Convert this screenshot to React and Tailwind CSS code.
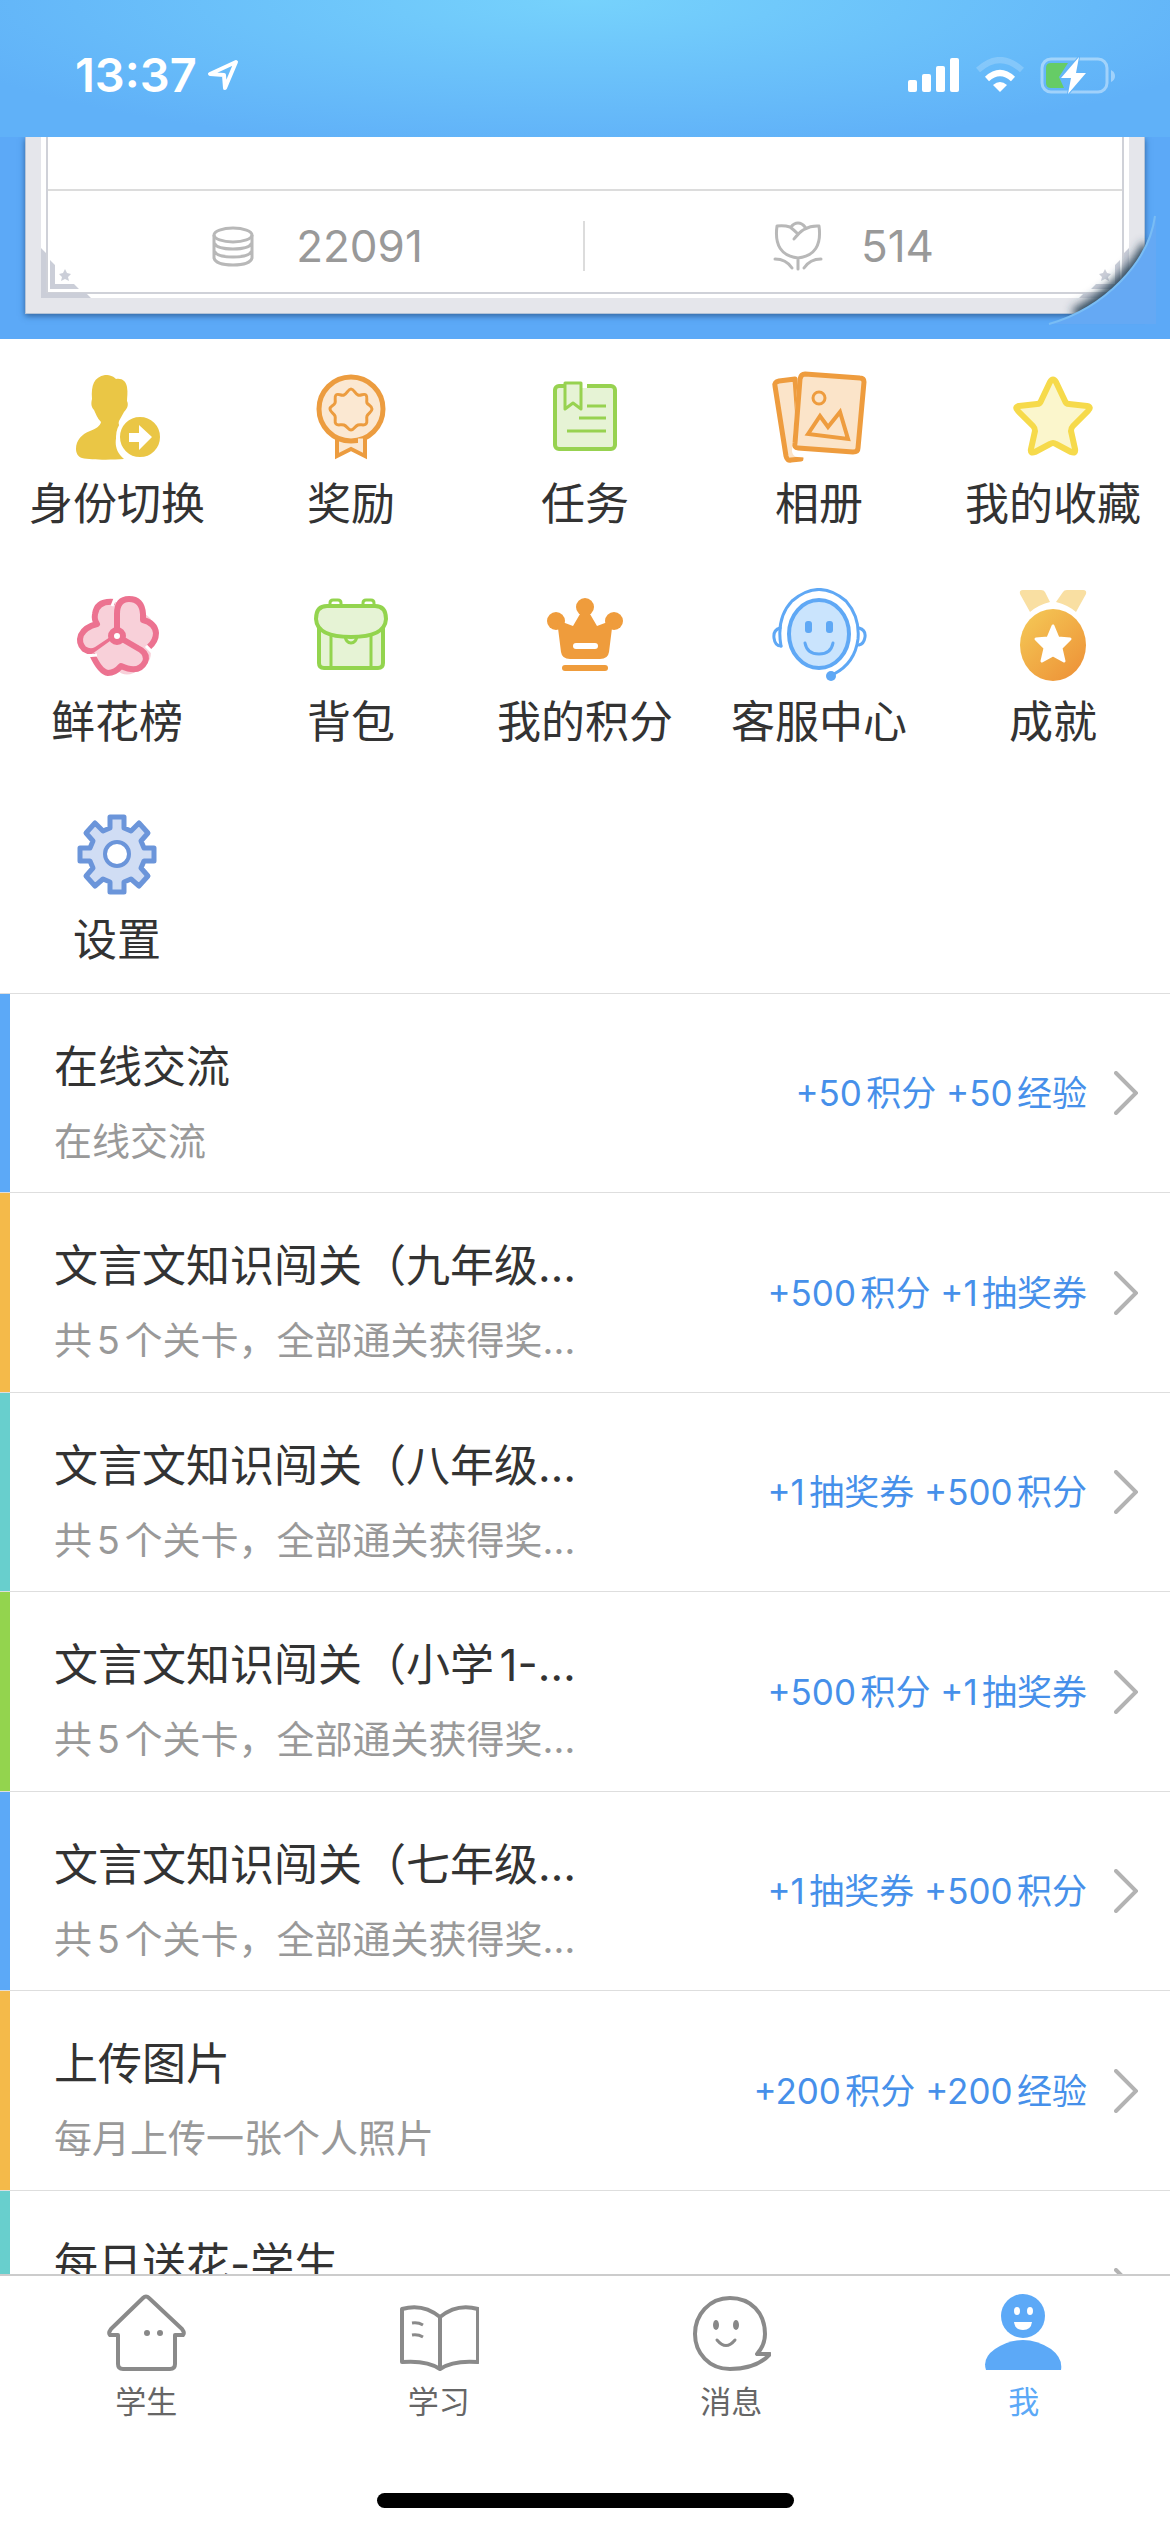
const FONT = "font-['Inter','Noto_Sans_CJK_SC',sans-serif]";

function IconSwitch() {
  return (
    <svg viewBox="0 0 96 96" className="size-24" aria-hidden="true">
      <path fill="#eac645" d="M36 5c6 0 9 2 11 4 6-1 10 2 11 8 1 6 0 10 0 14 2 4 0 8-3 11l-5 9c-1 3 0 4 2 6-6 8-9 22 3 32-13 1-33 1-42-1-4-1-6-5-6-9 0-9 6-15 14-18 7-3 10-5 11-9-4-4-5-8-7-12-3-3-3-7-2-11-1-14 2-22 13-24z" />
      <circle cx="71" cy="67" r="22" fill="#eac645" stroke="#fff" strokeWidth="4" />
      <path fill="#fff" d="M60 63h10v-8l13 12-13 13v-8H60z" />
    </svg>
  );
}

function IconAward() {
  return (
    <svg viewBox="0 0 96 96" className="size-24" fill="#fbe8d2" stroke="#ec9c3f" strokeWidth="5" aria-hidden="true">
      <path strokeWidth="4" d="M34 66v20l14-7 14 7V66" />
      <circle cx="48" cy="39" r="32" />
      <path strokeWidth="3" strokeLinejoin="round" d="M48 19c3 0 4 5 7 6s6-2 8 0 0 6 1 8 5 3 5 6-4 4-5 7 1 6-1 8-5 0-8 1-4 5-7 5-4-4-7-5-6 1-8-1 0-5-1-8-5-4-5-7 4-3 5-6-1-6 1-8 5 1 8 0 4-6 7-6z" />
      <path stroke="#fbe8d2" strokeWidth="5" d="M55 71h5" />
    </svg>
  );
}

function IconTask() {
  return (
    <svg viewBox="0 0 96 96" className="size-24" fill="#e6f3d5" stroke="#97d250" strokeWidth="4" aria-hidden="true">
      <rect x="18" y="16" width="60" height="63" rx="4" />
      <path stroke="#fff" strokeWidth="6" d="M44 15h6" />
      <path fill="#e6f3d5" strokeWidth="3" strokeLinejoin="round" d="M28 13h16v26l-8-6-8 6z" />
      <path strokeWidth="3" d="M50 36h19M42 48h27M30 61h39" />
    </svg>
  );
}

function IconAlbum() {
  return (
    <svg viewBox="0 0 96 96" className="size-24" fill="#fbe4c9" stroke="#ee9c3e" strokeLinejoin="round" aria-hidden="true">
      <path strokeWidth="5" d="M4 16q-1-4 4-5l16-2 6 80-10 1q-4 1-5-4z" />
      <path stroke="#fff" strokeWidth="12" d="M33 6l58 4-6 75-58-4z" />
      <path strokeWidth="5" d="M34 4l55 4q4 0 4 4l-6 66q0 4-5 4l-55-4q-4 0-3-5l5-64q1-5 5-5z" />
      <circle cx="48" cy="28" r="6" strokeWidth="3" />
      <path strokeWidth="4" strokeLinejoin="miter" d="M37 64l12-18 8 11 12-15 8 27z" />
    </svg>
  );
}

function IconStar() {
  return (
    <svg viewBox="0 0 96 96" className="size-24" fill="#fbf6cc" stroke="#f6da4b" strokeWidth="6" strokeLinejoin="round" aria-hidden="true">
      <path d="M45 12q3-5 6 0l9 19q1 3 4 3l18 2q5 1 1 5L68 56q-2 2-2 5l4 18q1 5-4 3l-15-8q-3-2-6 0l-15 8q-5 2-4-3l4-18q0-3-2-5L13 41q-4-4 1-5l18-2q3 0 4-3z" />
    </svg>
  );
}

function IconFlower() {
  return (
    <svg viewBox="0 0 96 96" className="size-24" fill="#f8d0d9" stroke="#ec7290" strokeWidth="6" strokeLinejoin="round" aria-hidden="true">
      <path stroke="none" d="M48 14Q28 12 26 36 8 40 10 54q2 8 14 8 8 26 24 20 10 10 24-2 14-8 8-22 14-24-8-34Q70 8 54 14z" />
      <path d="M46 14Q28 12 26 26q-1 6 2 10-12 3-16 11-3 8 3 14 6 4 12 1l21-14" />
      <path d="M48 47V26q0-15 12-15 13 0 14 15v6q12 3 13 13 0 8-7 14" />
      <path d="M48 48l24 14q7 5 4 12-6 12-24 4-6 7-13 7-8-1-16-19" />
      <path stroke="#fff" strokeWidth="3" d="M47 8l-4 10M16 68l12-1M84 65l-7-7" />
      <circle cx="48" cy="48" r="6" fill="#fff" />
    </svg>
  );
}

function IconBag() {
  return (
    <svg viewBox="0 0 96 96" className="size-24" fill="#e6f3d5" stroke="#93d44e" strokeWidth="4" aria-hidden="true">
      <path fill="#fff" strokeWidth="3" d="M27 20v-5q0-3 3-3h5q3 0 3 3v5M60 20v-5q0-3 3-3h5q3 0 3 3v5" />
      <path d="M16 38v37q0 5 5 5h54q5 0 5-5V38" />
      <path strokeWidth="3" d="M28 44v36M68 44v36" />
      <path strokeWidth="3" d="M42 48q1 7 6 7t6-7z" />
      <path d="M24 18h48q11 0 11 13-1 18-35 18T13 31q0-13 11-13z" />
    </svg>
  );
}

function IconCrown() {
  return (
    <svg viewBox="0 0 96 96" className="size-24" fill="#ef9c3c" aria-hidden="true">
      <circle cx="48" cy="19" r="9" />
      <circle cx="19" cy="33" r="9" />
      <circle cx="77" cy="33" r="9" />
      <path d="M43 26h10l7 12 16-6-4 32q-1 7-9 7H33q-8 0-9-7l-4-32 16 6z" />
      <rect x="36" y="55" width="25" height="6" rx="3" fill="#fff" />
      <rect x="25" y="77" width="46" height="6" rx="3" />
    </svg>
  );
}

function IconService() {
  return (
    <svg viewBox="0 0 96 96" className="size-24" fill="none" stroke="#5fa8f5" strokeLinecap="round" aria-hidden="true">
      <ellipse cx="48" cy="46" rx="30" ry="34" fill="#cae4fd" strokeWidth="4" />
      <path strokeWidth="3" d="M10 58Q5 30 21 13q27-23 54 0 14 16 12 38-3 24-24 35" />
      <path strokeWidth="3" d="M9 40q-7 2-6 10 1 8 7 8M88 40q7 2 6 9-1 7-6 8" />
      <ellipse cx="60" cy="88" rx="5" ry="5" fill="#5fa8f5" stroke="none" />
      <rect x="34" y="33" width="7" height="12" rx="3" fill="#5fa8f5" stroke="none" />
      <rect x="55" y="33" width="7" height="12" rx="3" fill="#5fa8f5" stroke="none" />
      <path strokeWidth="3" d="M34 55q2 11 14 11t14-11" />
    </svg>
  );
}

function IconMedal() {
  return (
    <svg viewBox="0 0 96 96" className="size-24" aria-hidden="true">
      <defs>
        <linearGradient id="medal" x1="0.1" y1="0.1" x2="0.8" y2="0.9">
          <stop offset="0" stopColor="#f4c554" />
          <stop offset="1" stopColor="#ee973a" />
        </linearGradient>
      </defs>
      <path fill="#f9dfa2" d="M18 2h18q3 0 4 2l5 10q-12 3-20 10L15 6q-1-4 3-4zM78 2H62q-3 0-4 2l-7 10q12 3 20 10L81 6q1-4-3-4z" />
      <ellipse cx="48" cy="57" rx="33" ry="36" fill="url(#medal)" />
      <path fill="#fff" stroke="#fff" strokeWidth="3" strokeLinejoin="round" d="M48 38l5 12 12 1-9 9 3 13-11-6-11 6 3-13-9-9 12-1z" />
    </svg>
  );
}

function IconGear() {
  return (
    <svg viewBox="0 0 96 96" className="size-24" fill="#d0ddf4" stroke="#6b95da" strokeWidth="5" strokeLinejoin="round" aria-hidden="true">
      <path d="M41 11h14v11l7 3 8-8 9 10-7 8 3 7h10v13H75l-3 7 7 8-9 10-8-7-7 3v10H41V76l-7-3-8 7-9-10 7-8-3-7H11V42h10l3-7-7-8 9-10 8 8 7-3z" />
      <circle cx="48" cy="48" r="12" fill="#fff" strokeWidth="4" />
    </svg>
  );
}

const shortcuts = [
  ["身份切换", IconSwitch],
  ["奖励", IconAward],
  ["任务", IconTask],
  ["相册", IconAlbum],
  ["我的收藏", IconStar],
  ["鲜花榜", IconFlower],
  ["背包", IconBag],
  ["我的积分", IconCrown],
  ["客服中心", IconService],
  ["成就", IconMedal],
  ["设置", IconGear],
];

const tasks = [
  ["在线交流", "在线交流", "+50积分 +50经验", "bg-[#5ca9f7]"],
  ["文言文知识闯关（九年级…", "共5个关卡，全部通关获得奖…", "+500积分 +1抽奖券", "bg-[#f4ba4a]"],
  ["文言文知识闯关（八年级…", "共5个关卡，全部通关获得奖…", "+1抽奖券 +500积分", "bg-[#68cfcd]"],
  ["文言文知识闯关（小学1-…", "共5个关卡，全部通关获得奖…", "+500积分 +1抽奖券", "bg-[#93d44e]"],
  ["文言文知识闯关（七年级…", "共5个关卡，全部通关获得奖…", "+1抽奖券 +500积分", "bg-[#5ca9f7]"],
  ["上传图片", "每月上传一张个人照片", "+200积分 +200经验", "bg-[#f4ba4a]"],
  ["每日送花-学生", "", "", "bg-[#68cfcd]"],
];

function StatusBar() {
  return (
    <header className="flex h-[137px] shrink-0 items-center justify-between bg-[radial-gradient(ellipse_60%_110%_at_50%_0%,#76d2fc_0%,#60b1f8_100%)] pr-[54px] pb-[14px] pl-[75px] text-white">
      <div className="flex items-center gap-[10px] pt-[26px]">
        <time className="text-[47px] leading-none font-semibold">13:37</time>
        <svg viewBox="0 0 32 32" className="size-8" fill="none" stroke="#fff" strokeWidth="4" strokeLinejoin="round" aria-hidden="true">
          <path d="M29 3L3 15l14 1 1 13z" />
        </svg>
      </div>
      <div className="flex items-center gap-4 pt-[26px]">
        <svg viewBox="0 0 52 36" className="h-9 w-[52px]" fill="#fff" aria-hidden="true">
          <rect x="0" y="23" width="9" height="12" rx="2" />
          <rect x="14" y="17" width="9" height="18" rx="2" />
          <rect x="28" y="9" width="9" height="26" rx="2" />
          <rect x="42" y="1" width="9" height="34" rx="2" />
        </svg>
        <svg viewBox="0 0 48 36" className="h-9 w-12" fill="none" stroke="#fff" aria-hidden="true">
          <path d="M2 13Q24-7 46 13" strokeWidth="6" opacity="0.2" />
          <path d="M11 22q13-12 26 0" strokeWidth="6" />
          <path d="M17 28q7-6 14 0l-7 7z" fill="#fff" stroke="none" />
        </svg>
        <svg viewBox="0 0 76 40" className="h-10 w-[76px]" aria-hidden="true">
          <rect x="2" y="4" width="65" height="33" rx="9" fill="none" stroke="#fff" strokeOpacity="0.4" strokeWidth="3" />
          <path d="M71 15q4 2 4 6t-4 6z" fill="#fff" fillOpacity="0.4" />
          <path d="M11 8h17l-9 14 5 11H11q-5 0-5-5V13q0-5 5-5z" fill="#66cc66" />
          <path d="M39 2L21 23h10l-3 16 18-21H36z" fill="#fff" stroke="#63b4f8" strokeWidth="2" paintOrder="stroke" strokeLinejoin="round" />
        </svg>
      </div>
    </header>
  );
}

function CornerArt() {
  return (
    <>
      <path d="M0 0l5 5v40h40l5 5H0z" />
      <path d="M9 12l5 5v19h19l5 5H9z" />
      <path d="M24 21l2 4 4 1-3 3 1 4-4-2-4 2 1-4-3-3 4-1z" />
    </>
  );
}

function Curl() {
  return (
    <svg viewBox="0 0 112 116" className="absolute right-[-13px] bottom-[-15px] h-[116px] w-[112px]" aria-hidden="true">
      <defs>
        <clipPath id="curl-inside">
          <path d="M110 4C104 50 60 96 4 112L0 0z" />
        </clipPath>
        <filter id="curl-soft" x="-20%" y="-20%" width="140%" height="140%">
          <feGaussianBlur stdDeviation="5" />
        </filter>
      </defs>
      <g clipPath="url(#curl-inside)">
        <path d="M104 34C92 60 60 90 30 104" fill="none" stroke="#2b4459" strokeWidth="15" filter="url(#curl-soft)" />
      </g>
      <path d="M110 4C104 50 60 96 4 112H111V4z" fill="#65a9f4" />
      <path d="M110 4C104 50 60 96 4 112" fill="none" stroke="#79bdf5" strokeWidth="2" />
    </svg>
  );
}

function Certificate() {
  return (
    <section className="shrink-0 bg-[#5ca9f7] px-[25px] pb-[25px]">
      <div className="relative border border-t-0 border-[#b4c3d6] bg-[#e5e6eb] px-[15px] pb-[15px] shadow-[0_2px_6px_rgba(30,70,120,0.7)]">
        <div className="relative bg-white px-[5px] pb-[4px]">
          <div className="border-2 border-t-0 border-[#cfd1d8]">
            <div className="h-[54px] border-b-2 border-[#dcdcdc]" />
            <div className="grid h-[101px] grid-cols-2 items-center pt-[8px] text-[44px] leading-none text-[#999]">
              <div className="flex h-[50px] items-center justify-center gap-[38px] border-r-2 border-[#dcdcdc]">
                <svg viewBox="0 0 50 50" className="size-[50px]" fill="none" stroke="#b8b8b8" strokeWidth="3" aria-hidden="true">
                  <ellipse cx="25" cy="14" rx="19" ry="7" />
                  <path d="M6 14v23q2 7 19 7t19-7V14M6 22q3 6 19 6t19-6M6 30q3 6 19 6t19-6" />
                </svg>
                <span>22091</span>
              </div>
              <div className="flex h-[50px] items-center justify-center gap-[38px]">
                <svg viewBox="0 0 50 50" className="size-[50px]" fill="none" stroke="#b8b8b8" strokeWidth="3" strokeLinecap="round" strokeLinejoin="round" aria-hidden="true">
                  <path d="M17 6q-6-2-13-1-4 29 21 32 25-3 21-32-15-1-25 13M17 6q4 3 8 7M18 6q3-4 7-4t7 4M25 37v11M2 38q11 0 17 9M48 38q-11 0-17 9" />
                </svg>
                <span>514</span>
              </div>
            </div>
          </div>
          <svg viewBox="0 0 50 50" className="absolute bottom-0 left-0 size-[50px]" fill="#cbced8" aria-hidden="true">
            <CornerArt />
          </svg>
          <svg viewBox="0 0 50 50" className="absolute right-0 bottom-0 size-[50px]" fill="#cbced8" aria-hidden="true">
            <g transform="matrix(-1 0 0 1 50 0)">
              <CornerArt />
            </g>
          </svg>
        </div>
        <Curl />
      </div>
    </section>
  );
}

function TabHome() {
  return (
    <svg viewBox="0 0 80 80" className="size-20" fill="none" stroke="#8a8a8a" strokeWidth="4" strokeLinejoin="round" aria-hidden="true">
      <path d="M12 43v29q0 5 5 5h47q5 0 5-5V43h8q2-2-1-6L43 6q-3-3-6 0L5 37q-3 4-1 6z" />
      <ellipse cx="41" cy="41" rx="3" ry="3" fill="#888" stroke="none" />
      <ellipse cx="54" cy="41" rx="3" ry="3" fill="#888" stroke="none" />
    </svg>
  );
}

function TabBook() {
  return (
    <svg viewBox="0 0 80 80" className="size-20" fill="none" stroke="#8a8a8a" strokeWidth="4" strokeLinejoin="round" aria-hidden="true">
      <path d="M41 25Q24 11 3 17v53q25-2 38 7 13-9 38-7V17Q58 11 41 25zM41 25v52" />
      <path strokeWidth="3" d="M13 31q6-1 11 2M13 43q6-1 11 2" />
    </svg>
  );
}

function TabChat() {
  return (
    <svg viewBox="0 0 80 80" className="size-20" fill="none" stroke="#8a8a8a" strokeWidth="4" strokeLinejoin="round" aria-hidden="true">
      <path d="M39 6C60 6 74 21 74 42q0 11-8 20h13Q66 77 39 77C18 77 4 61 4 42S18 6 39 6z" />
      <path strokeWidth="3" strokeLinecap="round" d="M26 48q9 11 18 0" />
      <ellipse cx="25" cy="33" rx="3" ry="5" fill="#888" stroke="none" />
      <ellipse cx="45" cy="33" rx="3" ry="5" fill="#888" stroke="none" />
    </svg>
  );
}

function TabMe() {
  return (
    <svg viewBox="0 0 80 80" className="size-20" fill="#5ca9f7" aria-hidden="true">
      <circle cx="39" cy="24" r="22" />
      <path d="M2 78Q-2 66 11 57q28-18 56 0 12 9 10 21z" />
      <ellipse cx="33" cy="19" rx="3" ry="4" fill="#fff" />
      <ellipse cx="46" cy="19" rx="3" ry="4" fill="#fff" />
      <path d="M30 30h18q-1 8-9 8t-9-8z" fill="#fff" />
    </svg>
  );
}

const tabs = [
  ["学生", TabHome],
  ["学习", TabBook],
  ["消息", TabChat],
  ["我", TabMe],
];

export default function App() {
  return (
    <div className={`${FONT} flex h-screen flex-col overflow-hidden bg-white text-[#333]`} lang="zh-CN">
      <StatusBar />
      <main className="flex min-h-0 flex-1 flex-col overflow-hidden">
        <Certificate />
        <nav className="grid shrink-0 grid-cols-5">
          {shortcuts.map(([label, Icon]) => (
            <button key={label} type="button" className="flex h-[218px] flex-col items-center pt-[31px]">
              <Icon />
              <span className="mt-2 text-[44px] leading-[60px] whitespace-nowrap">{label}</span>
            </button>
          ))}
        </nav>
        <ul>
          {tasks.map(([title, note, reward, bar]) => (
            <li key={title} className="flex h-[199px] border-t border-[#dedede] even:h-[200px]">
              <div className={`w-[10px] shrink-0 ${bar}`} />
              <button type="button" className="flex flex-1 items-center justify-between pr-8 pl-[44px] text-left">
                <span className="flex flex-col gap-[14px] self-start pt-[41px] whitespace-nowrap">
                  <span className="text-[44px] leading-[64px] [text-autospace:normal]">{title}</span>
                  {note && <span className="text-[38px] leading-[56px] text-[#999] [text-autospace:normal]">{note}</span>}
                </span>
                <span className="flex items-center gap-[27px] whitespace-nowrap">
                  {reward && <span className="text-[35px] leading-[52px] text-[#4690ea] [text-autospace:normal]">{reward}</span>}
                  <svg viewBox="0 0 24 44" className="h-11 w-6" fill="none" stroke="#b3b3b3" strokeWidth="4" strokeLinecap="round" aria-hidden="true">
                    <path d="M2 2l20 20L2 42" />
                  </svg>
                </span>
              </button>
            </li>
          ))}
        </ul>
      </main>
      <footer className="shrink-0 border-t-2 border-[#ccc] bg-white pb-6">
        <nav className="grid grid-cols-4">
          {tabs.map(([label, Icon]) => (
            <a
              key={label}
              href="#"
              aria-current={label === "我" ? "page" : undefined}
              className="flex flex-col items-center pt-4 text-[#666] aria-[current=page]:text-[#5ca9f7]"
            >
              <Icon />
              <span className="mt-2 text-[31px] leading-[44px]">{label}</span>
            </a>
          ))}
        </nav>
        <div className="mx-auto mt-[69px] h-[15px] w-[417px] rounded-full bg-black" />
      </footer>
    </div>
  );
}
